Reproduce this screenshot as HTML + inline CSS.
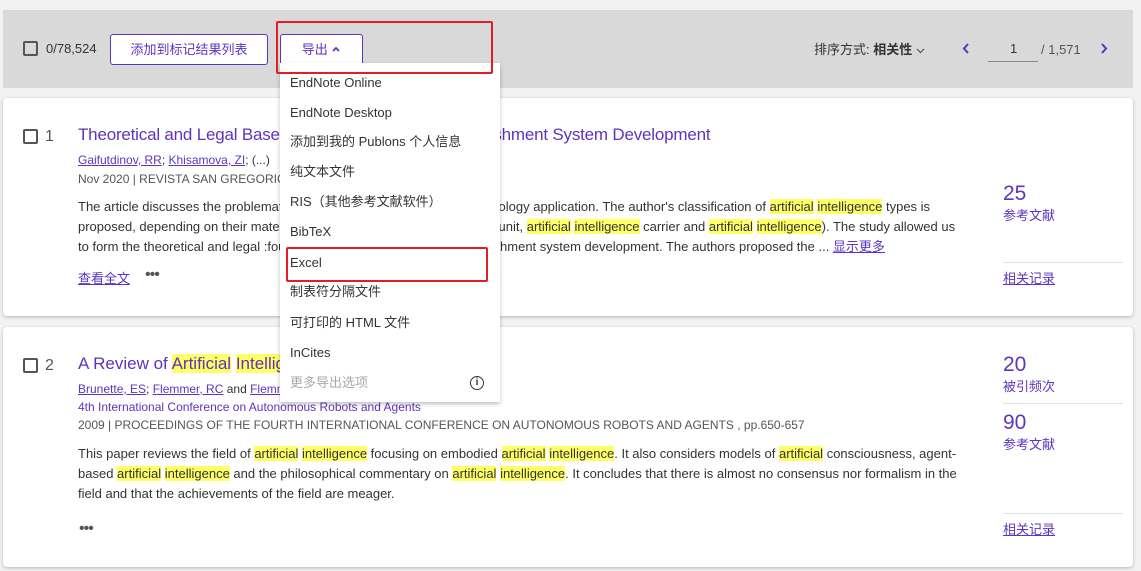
<!DOCTYPE html>
<html><head><meta charset="utf-8"><style>
*{margin:0;padding:0;box-sizing:border-box}
body{width:1141px;height:571px;background:#f2f2f2;font-family:"Liberation Sans","Noto Sans CJK SC",sans-serif;color:#333;position:relative;overflow:hidden;font-size:13px}
.a{position:absolute;white-space:nowrap;line-height:16px}
.bar{position:absolute;left:3px;top:10px;width:1130px;height:78px;background:#d9d9d9}
.card{position:absolute;left:3px;width:1130px;background:#fff;border-radius:4px;box-shadow:0 1px 3px rgba(0,0,0,.25)}
.cb{position:absolute;width:15px;height:15px;border:2px solid #555;border-radius:2px}
.p{color:#5e33bf}
.u{text-decoration:underline}
.hl{background:#ffff66}
.btn{position:absolute;border:1px solid #5e33bf;border-radius:3px;background:#fff;color:#5e33bf;font-size:13px;text-align:center}
.menu{position:absolute;left:280px;top:63px;width:220px;height:339px;background:#fff;box-shadow:0 2px 4px rgba(0,0,0,.25)}
.mi{position:absolute;left:10px;font-size:13px;color:#333;line-height:16px;white-space:nowrap}
.red{position:absolute;border:2px solid #e02020;border-radius:2px}
.abs{font-size:13px;line-height:20px;color:#333}
.hr{position:absolute;height:1px;background:#e3e3e3}
</style></head><body>
<div class="bar"></div>
<div class="cb" style="left:23px;top:41px"></div>
<div class="a" style="left:46px;top:41px;font-size:13px">0/78,524</div>
<div class="btn" style="left:110px;top:34px;width:158px;height:31px;line-height:29px">添加到标记结果列表</div>
<div class="btn" style="left:280px;top:34px;width:83px;height:31px;line-height:29px;border-bottom:none;border-radius:3px 3px 0 0">导出 <svg width="10" height="8" viewBox="0 0 10 8" style="vertical-align:1px"><path d="M2 6 L5 3 L8 6" stroke="#5e33bf" stroke-width="1.8" fill="none"/></svg></div>
<div class="a" style="left:814px;top:42px;font-size:13px">排序方式: <b>相关性</b> <svg width="9" height="7" viewBox="0 0 9 7"><path d="M1 2 L4.5 5.5 L8 2" stroke="#555" stroke-width="1.2" fill="none"/></svg></div>
<svg class="a" style="left:962px;top:43px" width="8" height="11" viewBox="0 0 8 11"><path d="M6 1 L2 5.5 L6 10" stroke="#5e33bf" stroke-width="2" fill="none"/></svg>
<div class="a" style="left:1010px;top:41px">1</div>
<div class="a" style="left:988px;top:61px;width:50px;height:1px;background:#888"></div>
<div class="a" style="left:1041px;top:42px;color:#555">/ 1,571</div>
<svg class="a" style="left:1100px;top:43px" width="8" height="11" viewBox="0 0 8 11"><path d="M2 1 L6 5.5 L2 10" stroke="#5e33bf" stroke-width="2" fill="none"/></svg>

<div class="card" style="top:98px;height:218px"></div>
<div class="cb" style="left:23px;top:129px"></div>
<div class="a" style="left:45px;top:128px;font-size:16px;color:#555;line-height:18px">1</div>
<div class="a p" style="left:78px;top:125px;font-size:17px;line-height:20px;letter-spacing:-0.2px">Theoretical and Legal Bases of Artificial Intelligence Punishment System Development</div>
<div class="a" style="left:78px;top:152px;font-size:12px"><span class="p u">Gaifutdinov, RR</span>; <span class="p u">Khisamova, ZI</span>; (...)</div>
<div class="a" style="left:78px;top:171px;font-size:12px;color:#555">Nov 2020 | REVISTA SAN GREGORIO</div>
<div class="a abs" style="left:78px;top:197px;line-height:20px">The article discusses the problematic issues of artificial intelligence technology application. The author's classification of <span class="hl">artificial</span> <span class="hl">intelligence</span> types is<br>proposed, depending on their material carrier (robot, artificial intelligence unit, <span class="hl">artificial</span> <span class="hl">intelligence</span> carrier and <span class="hl">artificial</span> <span class="hl">intelligence</span>). The study allowed us<br>to form the theoretical and legal :foundations of artificial intelligence punishment system development. The authors proposed the ... <span class="p u">显示更多</span></div>
<div class="a p u" style="left:78px;top:271px">查看全文</div>
<div class="a" style="left:145px;top:267px;font-size:16px;color:#555;letter-spacing:-1px">•••</div>
<div class="a p" style="left:1003px;top:183px;font-size:21px;line-height:22px">25</div>
<div class="a p" style="left:1003px;top:208px">参考文献</div>
<div class="hr" style="left:1003px;top:262px;width:120px"></div>
<div class="a p u" style="left:1003px;top:271px">相关记录</div>

<div class="card" style="top:327px;height:240px"></div>
<div class="cb" style="left:23px;top:358px"></div>
<div class="a" style="left:45px;top:357px;font-size:16px;color:#555;line-height:18px">2</div>
<div class="a p" style="left:78px;top:354px;font-size:17px;line-height:20px">A Review of <span class="hl">Artificial</span> <span class="hl">Intelligence</span></div>
<div class="a" style="left:78px;top:381px;font-size:12px"><span class="p u">Brunette, ES</span>; <span class="p u">Flemmer, RC</span> and <span class="p u">Flemmer, CL</span></div>
<div class="a p" style="left:78px;top:399px;font-size:12px">4th International Conference on Autonomous Robots and Agents</div>
<div class="a" style="left:78px;top:417px;font-size:12px;color:#555">2009 | PROCEEDINGS OF THE FOURTH INTERNATIONAL CONFERENCE ON AUTONOMOUS ROBOTS AND AGENTS , pp.650-657</div>
<div class="a abs" style="left:78px;top:444px;line-height:20px">This paper reviews the field of <span class="hl">artificial</span> <span class="hl">intelligence</span> focusing on embodied <span class="hl">artificial</span> <span class="hl">intelligence</span>. It also considers models of <span class="hl">artificial</span> consciousness, agent-<br>based <span class="hl">artificial</span> <span class="hl">intelligence</span> and the philosophical commentary on <span class="hl">artificial</span> <span class="hl">intelligence</span>. It concludes that there is almost no consensus nor formalism in the<br>field and that the achievements of the field are meager.</div>
<div class="a" style="left:79px;top:521px;font-size:16px;color:#555;letter-spacing:-1px">•••</div>
<div class="a p" style="left:1003px;top:354px;font-size:21px;line-height:22px">20</div>
<div class="a p" style="left:1003px;top:379px">被引频次</div>
<div class="hr" style="left:1003px;top:403px;width:120px"></div>
<div class="a p" style="left:1003px;top:412px;font-size:21px;line-height:22px">90</div>
<div class="a p" style="left:1003px;top:437px">参考文献</div>
<div class="hr" style="left:1003px;top:513px;width:120px"></div>
<div class="a p u" style="left:1003px;top:522px">相关记录</div>

<div class="menu">
<div class="mi" style="top:12px">EndNote Online</div>
<div class="mi" style="top:42px">EndNote Desktop</div>
<div class="mi" style="top:71px">添加到我的 Publons 个人信息</div>
<div class="mi" style="top:101px">纯文本文件</div>
<div class="mi" style="top:131px">RIS（其他参考文献软件）</div>
<div class="mi" style="top:161px">BibTeX</div>
<div class="mi" style="top:192px">Excel</div>
<div class="mi" style="top:221px">制表符分隔文件</div>
<div class="mi" style="top:252px">可打印的 HTML 文件</div>
<div class="mi" style="top:282px">InCites</div>
<div class="mi" style="top:312px;color:#aaa">更多导出选项</div>
<div class="a" style="left:190px;top:313px;width:14px;height:14px;border:1px solid #333;border-radius:50%;font-size:10px;text-align:center;line-height:12px;font-weight:bold">i</div>
</div>
<div class="red" style="left:276px;top:21px;width:217px;height:53px"></div>
<div class="red" style="left:286px;top:247px;width:202px;height:35px"></div>
</body></html>
